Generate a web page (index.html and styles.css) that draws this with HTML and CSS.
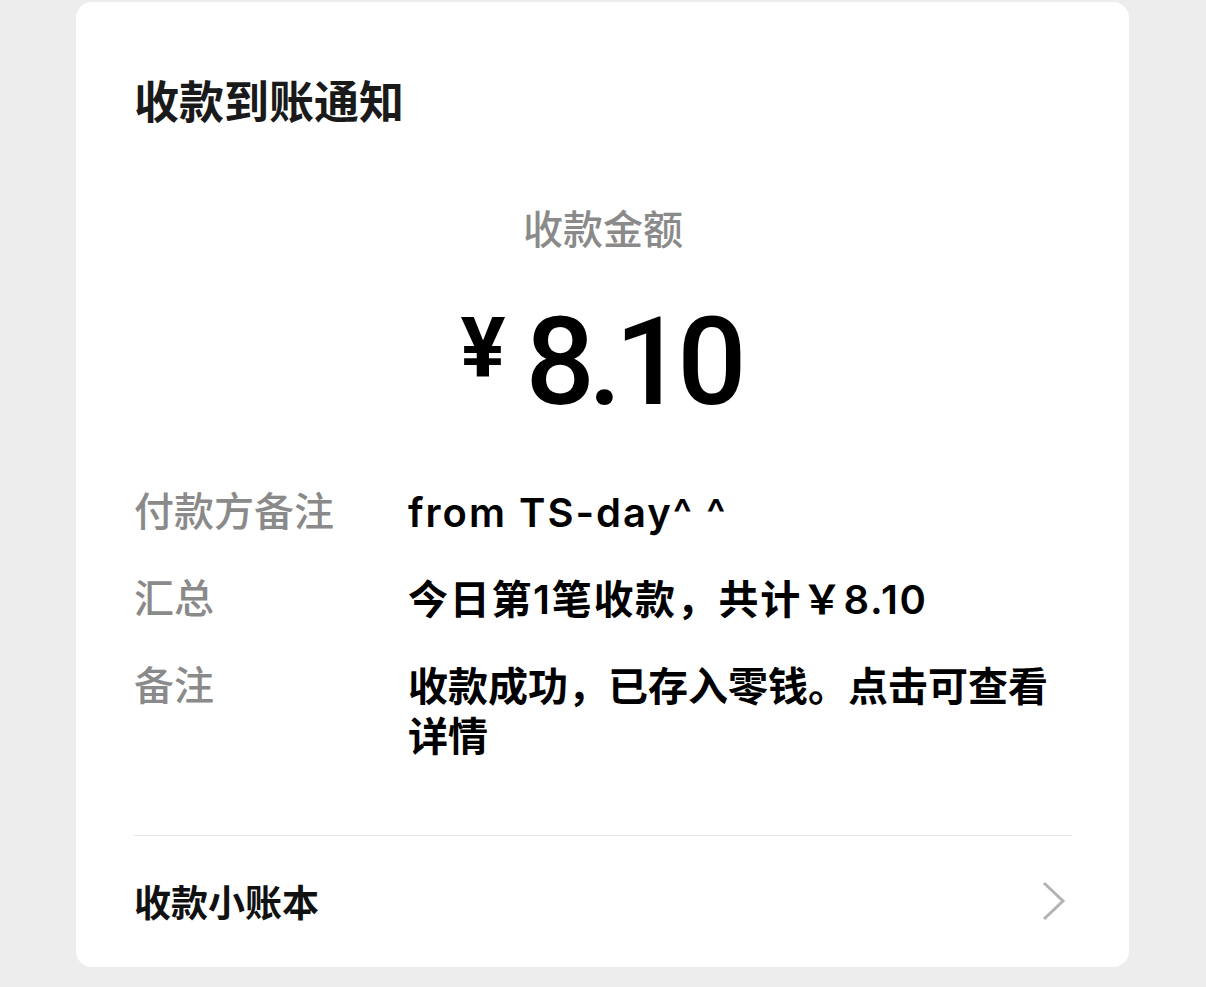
FILE: index.html
```html
<!DOCTYPE html>
<html>
<head>
<meta name="viewport" content="width=device-width, initial-scale=1">
<link rel="stylesheet" href="styles.css">
</head>
<body>

<div class="card">
  <h2 class="title">收款到账通知</h2>

  <div class="amountLabel">收款金额</div>
  <div class="amount">
    <span class="currency">¥</span>
    <span class="number">8.10</span>
  </div>

  <div class="details">
    <div class="row">
      <span class="label">付款方备注</span>
      <span class="value latin">from TS-day^ ^</span>
    </div>
    <div class="row">
      <span class="label">汇总</span>
      <span class="value spaced">今日第1笔收款，共计￥8.10</span>
    </div>
    <div class="row">
      <span class="label">备注</span>
      <span class="value">收款成功，已存入零钱。点击可查看详情</span>
    </div>
  </div>

  <div class="footer">
    <span class="footerText">收款小账本</span>
    <svg class="arrow" width="26" height="40" viewBox="0 0 26 40">
      <polyline points="3,2 22,20 3,38" fill="none" stroke="#b3b3b3" stroke-width="3"/>
    </svg>
  </div>
</div>

</body>
</html>
```

FILE: styles.css
```css
body {
  margin: 0;
  background: #ededed;
}

* {
  box-sizing: border-box;
  font-family: Roboto, "Noto Sans CJK SC", sans-serif;
}

/* White notification card */
.card {
  width: 1053px;
  height: 965px;
  margin: 2px 0 0 76px;
  padding: 0 57px 0 58px;
  background: #fff;
  border-radius: 16px;
  display: flex;
  flex-direction: column;
}

.title {
  margin: 72px 0 0 0;
  font-size: 45px;
  line-height: 60px;
  font-weight: 700;
  color: #1a1a1a;
}

/* Amount block */
.amountLabel {
  margin-top: 72px;
  text-align: center;
  font-size: 40px;
  line-height: 50px;
  font-weight: 500;
  color: #8a8a8a;
}

.amount {
  margin-top: 46px;
  padding-right: 6px;
  display: flex;
  justify-content: center;
  align-items: flex-start;
  color: #000;
}

.currency {
  font-size: 84px;
  line-height: 1;
  font-weight: 700;
  margin-top: 5px;
  margin-right: 20px;
}

.number {
  font-size: 122px;
  line-height: 1;
  font-weight: 500;
  letter-spacing: -7px;
}

/* Detail rows */
.details {
  margin-top: 64px;
  display: flex;
  flex-direction: column;
  gap: 37px;
}

.row {
  display: flex;
  font-size: 40px;
  line-height: 50px;
}

.label {
  width: 274px;
  flex-shrink: 0;
  color: #8a8a8a;
  font-weight: 500;
}

.value {
  flex: 1;
  color: #000;
  font-weight: 600;
  font-family: Inter, "Noto Sans CJK SC", sans-serif;
}

.latin {
  letter-spacing: 2px;
}

.spaced {
  letter-spacing: 1.7px;
}

/* Bottom link */
.footer {
  margin-top: 73px;
  height: 131px;
  border-top: 1px solid #e5e5e5;
  display: flex;
  align-items: center;
  justify-content: space-between;
}

.footerText {
  font-size: 37px;
  font-weight: 700;
  color: #111;
}

.arrow {
  margin-right: 5px;
}
```
